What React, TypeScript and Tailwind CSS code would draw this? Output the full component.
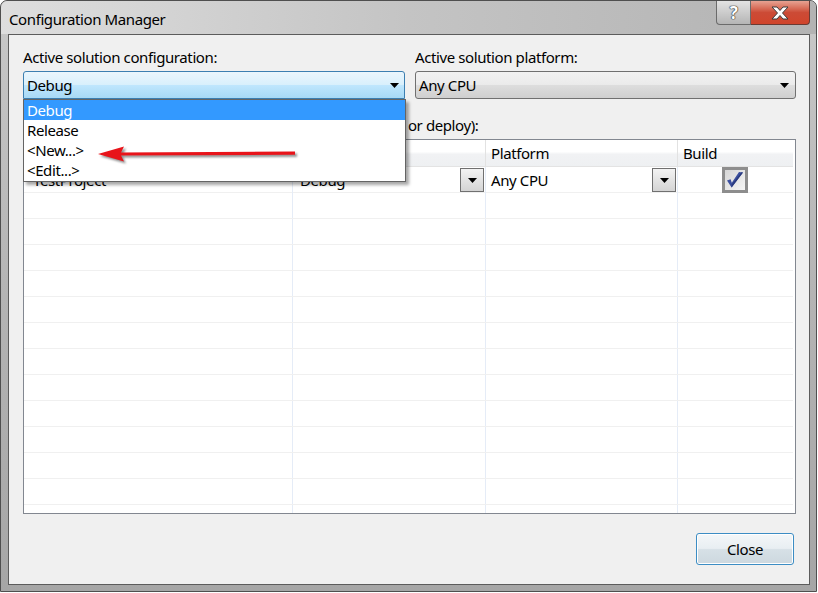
import React from 'react';

const font = { fontFamily: '"Noto Sans", "Open Sans", sans-serif' };

function Tri() {
  return (
    <svg width="9" height="5" viewBox="0 0 9 5">
      <path d="M0 0h9L4.5 5z" fill="#000" />
    </svg>
  );
}

function CellButton() {
  return (
    <div className="flex h-[24px] w-[24px] items-center justify-center border border-[#707070] bg-gradient-to-b from-[#f3f3f3] to-[#d4d4d4]">
      <Tri />
    </div>
  );
}

function Check() {
  return (
    <div className="flex h-[26px] w-[26px] items-center justify-center border-[3px] border-[#8d8d8d] bg-gradient-to-br from-[#d6d6d6] to-[#f5f5f5]">
      <svg width="18" height="18" viewBox="0 0 18 18">
        <path d="M1 9.5 5.6 16.5 17 1.5 13 1 5.8 11.8 4.6 8.2z" fill="#3b4f9e" />
        <path d="M5.6 16.5 17 1.5 15.5 1.3 5.7 13.5z" fill="#2a3a7e" />
      </svg>
    </div>
  );
}

const items = ['Debug', 'Release', '<New...>', '<Edit...>'];
const rows = Array.from({ length: 15 }, (_, i) => i);

export default function App() {
  return (
    <div className="h-[593px] w-[818px] bg-white text-[15px] tracking-[-0.4px] text-black" style={font}>
      <div className="relative flex h-[592px] w-[817px] flex-col rounded-t-[7px] border border-[#4f4f4f] bg-gradient-to-b from-[#c9c9c9] via-[#b4b4b4] to-[#a6a6a6]">
        {/* title bar */}
        <div className="flex h-[33px] items-start rounded-t-[7px] bg-gradient-to-r from-[#dedede] via-[#c4c4c4] to-[#b3b3b3]">
          <span className="ml-[8px] mt-[7px] leading-[22px]">Configuration Manager</span>
          <div className="ml-auto mr-[6px] flex h-[24px]">
            <div className="flex w-[35px] items-center justify-center rounded-bl-[4px] border border-t-0 border-[#6b6b6b] bg-gradient-to-b from-[#e3e3e3] to-[#b5b5b5]">
              <span className="text-[17px] font-bold leading-none text-white [text-shadow:0_0_1px_#222,0_0_1px_#222,0_0_1px_#222]">?</span>
            </div>
            <div className="flex w-[59px] items-center justify-center rounded-br-[4px] border border-l-0 border-t-0 border-[#6b3a33] bg-gradient-to-b from-[#e6a292] via-[#cc4b36] to-[#d0442b]">
              <svg width="18" height="14" viewBox="0 0 18 14">
                <path d="M1 1h5l3 3.5L12 1h5l-5.5 6L17 13h-5l-3-3.5L6 13H1l5.5-6z" fill="#fff" stroke="#3b3b3b" strokeWidth="1" />
              </svg>
            </div>
          </div>
        </div>

        {/* client area */}
        <div className="mb-[6px] ml-[7px] mr-[6px] flex flex-1 flex-col border border-[#5c5c5c] bg-[#f0f0f0] pl-[14px] pr-[13px] pt-[12px]">
          <div className="flex gap-[10px]">
            <div className="relative w-[382px]">
              <div className="h-[20px] leading-[20px]">Active solution configuration:</div>
              <div className="mt-[4px] flex h-[28px] items-center rounded-t-[3px] border border-[#3c7fb1] bg-[linear-gradient(#eaf6fd_0%,#d9f0fc_48%,#bee6fd_52%,#a7d9f5_100%)] pl-[3px] pr-[5px]">
                <span className="flex-1">Debug</span>
                <Tri />
              </div>
              <div className="absolute left-0 top-full z-20 w-[383px] border border-[#646464] bg-white pb-[1px] shadow-[3px_3px_3px_rgba(0,0,0,0.35)]">
                {items.map((it, i) => (
                  <div
                    key={it}
                    className={
                      i === 0
                        ? 'h-[20px] bg-[#3399ff] pl-[3px] leading-[20px] text-white'
                        : 'h-[20px] pl-[3px] leading-[20px]'
                    }
                  >
                    {it}
                  </div>
                ))}
              </div>
            </div>
            <div className="w-[381px]">
              <div className="h-[20px] leading-[20px]">Active solution platform:</div>
              <div className="mt-[4px] flex h-[28px] items-center rounded-[3px] border border-[#707070] bg-[linear-gradient(#f2f2f2_0%,#ebebeb_48%,#dddddd_52%,#cfcfcf_100%)] pl-[3px] pr-[6px]">
                <span className="flex-1">Any CPU</span>
                <Tri />
              </div>
            </div>
          </div>

          <div className="mt-[16px] h-[20px] leading-[20px]">
            Project contexts (check the project configurations to build or deploy):
          </div>

          <div className="mt-[4px] h-[375px] overflow-hidden border border-[#828790] bg-white pr-[2px]">
            <div className="grid h-[27px] grid-cols-[269px_193px_192px_1fr] border-b border-[#e3e3e3] bg-[linear-gradient(#ffffff_0%,#ffffff_45%,#f1f2f4_55%,#eef0f2_100%)]">
              <div className="border-r border-[#e2e2e2] pl-[6px] leading-[26px]">Project</div>
              <div className="border-r border-[#e2e2e2] pl-[5px] leading-[26px]">Configuration</div>
              <div className="border-r border-[#e2e2e2] pl-[5px] leading-[26px]">Platform</div>
              <div className="pl-[5px] leading-[26px]">Build</div>
            </div>
            {rows.map((r) => (
              <div key={r} className="grid h-[26px] grid-cols-[269px_193px_192px_1fr] border-b border-[#f0f0f0]">
                <div className="flex items-center border-r border-[#e5ecf7] pl-[9px]">{r === 0 ? 'TestProject' : ''}</div>
                <div className="flex items-center border-r border-[#e5ecf7] pl-[7px] pr-[1px]">
                  {r === 0 && (
                    <>
                      <span className="flex-1">Debug</span>
                      <CellButton />
                    </>
                  )}
                </div>
                <div className="flex items-center border-r border-[#e5ecf7] pl-[5px] pr-[1px]">
                  {r === 0 && (
                    <>
                      <span className="flex-1">Any CPU</span>
                      <CellButton />
                    </>
                  )}
                </div>
                <div className="flex items-center justify-center pr-[2px]">{r === 0 && <Check />}</div>
              </div>
            ))}
          </div>

          <div className="mt-[19px] flex justify-end pr-[2px]">
            <button className="h-[32px] w-[98px] rounded-[3px] border border-[#3c8dc4] bg-[linear-gradient(#f4f7f9_0%,#e8eef2_48%,#d6e0e6_52%,#cdd8df_100%)] leading-[28px] shadow-[inset_0_0_0_1px_#ffffff]">
              Close
            </button>
          </div>
        </div>

        {/* annotation arrow */}
        <svg className="absolute left-[90px] top-[140px] z-30 drop-shadow-[2px_2px_1px_rgba(0,0,0,0.45)]" width="215" height="25" viewBox="0 0 215 25">
          <path d="M7 13 33 5.5 30 11.6 204 10.6 204 13.8 30 14.6 33 20.5z" fill="#e8141a" />
        </svg>
      </div>
    </div>
  );
}
